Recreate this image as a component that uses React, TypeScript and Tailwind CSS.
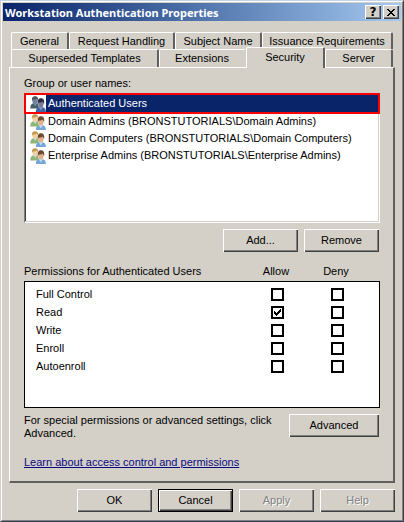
import { useState } from "react";
import type { ReactNode } from "react";

const permissions = [
  { name: "Full Control", allow: false, deny: false },
  { name: "Read", allow: true, deny: false },
  { name: "Write", allow: false, deny: false },
  { name: "Enroll", allow: false, deny: false },
  { name: "Autoenroll", allow: false, deny: false },
];

const users = [
  "Authenticated Users",
  "Domain Admins (BRONSTUTORIALS\\Domain Admins)",
  "Domain Computers (BRONSTUTORIALS\\Domain Computers)",
  "Enterprise Admins (BRONSTUTORIALS\\Enterprise Admins)",
];

function UsersIcon({ selected }: { selected: boolean }) {
  const c = selected
    ? { hairA: "#4a5260", skinA: "#717f9a", bodyA: "#46606a", hairB: "#2a2c3c", skinB: "#747a98", bodyB: "#3f64a4", light: "#7d98c4" }
    : { hairA: "#c09a55", skinA: "#f2d0a0", bodyA: "#8fb573", hairB: "#6b4a30", skinB: "#e4b08a", bodyB: "#74a6d8", light: "#c3dcf2" };
  return (
    <svg viewBox="0 0 16 16" className="h-4 w-4 shrink-0" aria-hidden="true">
      <path d="M0.300 12.500C0.300 9.500 1.200 8 3 7.200h4.600l1.800 5.300z" fill={c.bodyA} />
      <path d="M3.300 7 5.200 10l1.800-3z" fill={c.light} />
      <ellipse cx="5" cy="4.200" rx="2.700" ry="3.500" fill={c.skinA} />
      <path d="M2 4.600C1.500 1.500 2.900.2 5 .2s3.600 1.200 3.100 4.400C7.500 3.800 7.200 3 6.900 2.400 5.600 3.300 4 3.500 3 3.400z" fill={c.hairA} />
      <path d="M5.800 15.900C5.800 13 7 11.700 8.800 11.200h4c2 .6 3.100 2.100 3.100 4.700z" fill={c.bodyB} />
      <path d="M8.700 11l2.200 3.400 2-3.400z" fill={c.light} />
      <ellipse cx="10.900" cy="7.400" rx="2.700" ry="3.900" fill={c.skinB} />
      <path d="M7.900 8C7.200 4 8.600 2.200 10.900 2.200s3.900 1.700 3.200 5.800c-.7-.7-1.200-1.700-1.400-2.600-1.200.9-2.600 1.100-3.800 1.100z" fill={c.hairB} />
    </svg>
  );
}

function Tab({ children, className = "", selected = false }: { children: ReactNode; className?: string; selected?: boolean }) {
  return (
    <button
      type="button"
      role="tab"
      aria-selected={selected}
      className={`flex items-center justify-center whitespace-nowrap rounded-t-[2px] border-l border-t border-r-2 border-l-white border-t-white bg-[#d4d0c8] ${className}`}
    >
      {children}
    </button>
  );
}

function PushButton({ children, className = "", isDefault = false, disabled = false }: { children: ReactNode; className?: string; isDefault?: boolean; disabled?: boolean }) {
  return (
    <button
      type="button"
      disabled={disabled}
      className={`flex h-[23px] shrink-0 items-center justify-center bg-[#d4d0c8] disabled:text-[#808080] disabled:[text-shadow:1px_1px_0_white] ${
        isDefault
          ? "border border-black shadow-[inset_1px_1px_0_white,inset_-1px_-1px_0_#404040,inset_-2px_-2px_0_#808080]"
          : "shadow-[inset_1px_1px_0_white,inset_-1px_-1px_0_#404040,inset_-2px_-2px_0_#808080]"
      } ${className}`}
    >
      {children}
    </button>
  );
}

function PermissionBox({ label, initial }: { label: string; initial: boolean }) {
  return (
    <span className="relative mx-auto block h-[13px] w-[13px]">
      <input
        type="checkbox"
        aria-label={label}
        defaultChecked={initial}
        className="peer block h-[13px] w-[13px] appearance-none border-2 border-black bg-white"
      />
      <svg viewBox="0 0 7 7" shapeRendering="crispEdges" className="pointer-events-none absolute left-[3px] top-[3px] hidden h-[7px] w-[7px] peer-checked:block" aria-hidden="true">
        <path d="M0 2h1v1h1v1h1v-1h1v-1h1v-1h1v-1h1v3h-1v1h-1v1h-1v1h-1v1h-1v-1h-1v-1h-1z" fill="black" />
      </svg>
    </span>
  );
}

export default function App() {
  const [selected, setSelected] = useState(0);
  return (
    <div className="min-h-screen w-full border border-b-[#33415c] border-l-[#d4d0c8] border-r-[#404040] border-t-[#c4d4e8] bg-[#d4d0c8] font-['Liberation_Sans',Arial,sans-serif] text-[11px] leading-[13px] text-black">
      <div className="flex min-h-[520px] flex-col border border-b-[#808080] border-l-white border-r-[#808080] border-t-white p-px">
        <header className="flex h-[18px] shrink-0 items-center bg-linear-to-r from-[#0a246a] to-[#a6caf0] pl-[2px] pr-[2px]">
          <h1 className="flex-1 whitespace-nowrap font-['Noto_Sans','Open_Sans',sans-serif] text-[11px] font-bold text-white">Workstation Authentication Properties</h1>
          <button type="button" aria-label="Help" className="flex h-[14px] w-4 items-center justify-center bg-[#d4d0c8] font-['DejaVu_Sans',sans-serif] text-[12px] font-bold shadow-[inset_1px_1px_0_white,inset_-1px_-1px_0_#404040,inset_-2px_-2px_0_#808080]">
            ?
          </button>
          <button type="button" aria-label="Close" className="ml-[2px] flex h-[14px] w-4 items-center justify-center bg-[#d4d0c8] shadow-[inset_1px_1px_0_white,inset_-1px_-1px_0_#404040,inset_-2px_-2px_0_#808080]">
            <svg viewBox="0 0 8 7" shapeRendering="crispEdges" className="h-[7px] w-2" aria-hidden="true">
              <path d="M0 0h2v1h1v1h2v-1h1v-1h2v1h-1v1h-1v1h-1v1h1v1h1v1h1v1h-2v-1h-1v-1h-2v1h-1v1h-2v-1h1v-1h1v-1h1v-1h-1v-1h-1v-1h-1z" fill="black" />
            </svg>
          </button>
        </header>

        <main className="mt-[11px] flex flex-1 flex-col px-[6px]">
          <div role="tablist" className="px-[2px]">
            <div className="flex h-[17px]">
              <Tab className="w-[58px] border-r-[#606060]">General</Tab>
              <Tab className="w-[106px] border-r-[#606060]">Request Handling</Tab>
              <Tab className="w-[87px] border-r-[#606060]">Subject Name</Tab>
              <Tab className="flex-1 border-r-[#606060]">Issuance Requirements</Tab>
            </div>
            <div className="flex h-[18px]">
              <Tab className="w-[148px] border-r-[#606060]">Superseded Templates</Tab>
              <Tab className="w-[87px] border-r-transparent">Extensions</Tab>
              <Tab selected className="relative z-10 -mb-px -mt-[2px] w-[79px] border-r-[#606060] pb-[2px]">Security</Tab>
              <Tab className="flex-1 border-r-[#606060]">Server</Tab>
            </div>
          </div>

          <section className="flex flex-1 flex-col border-b-2 border-l border-r-2 border-t border-b-[#606060] border-l-white border-r-[#606060] border-t-white pb-[11px] pl-[14px] pr-[13px] pt-[9px]">
            <h2 id="names">Group or user names:</h2>
            <ul role="listbox" aria-labelledby="names" className="mt-[3px] h-[130px] border border-b-white border-l-[#808080] border-r-white border-t-[#808080] bg-white shadow-[inset_-1px_-1px_0_#d4d0c8,inset_1px_1px_0_#404040]">
              {users.map((user, i) => (
                <li
                  key={user}
                  role="option"
                  aria-selected={selected === i}
                  onClick={() => setSelected(i)}
                  className={
                    selected === i
                      ? "-mx-px -mb-px -mt-px flex h-[21px] items-center border-2 border-[#f80000] bg-white pl-[4px]"
                      : "flex h-[17px] items-center pl-[5px]"
                  }
                >
                  <UsersIcon selected={selected === i} />
                  <span className={selected === i ? "flex h-full flex-1 items-center bg-[#0a246a] pl-[2px] text-white" : "pl-[2px]"}>{user}</span>
                </li>
              ))}
            </ul>

            <div className="mt-[6px] flex justify-end gap-[6px] pr-px">
              <PushButton className="w-[75px]">Add...</PushButton>
              <PushButton className="w-[75px]">Remove</PushButton>
            </div>

            <table className="mt-[13px] block">
              <thead className="block">
                <tr className="grid grid-cols-[1fr_60px_60px] pr-[12px]">
                  <th scope="col" className="text-left font-normal">Permissions for Authenticated Users</th>
                  <th scope="col" className="pr-[4px] font-normal">Allow</th>
                  <th scope="col" className="pr-[4px] font-normal">Deny</th>
                </tr>
              </thead>
              <tbody className="mt-[3px] block h-[127px] border border-black bg-white pl-[11px] pr-[12px] pt-[3px]">
                {permissions.map((p) => (
                  <tr key={p.name} className="grid h-[18px] grid-cols-[1fr_60px_60px] items-center">
                    <th scope="row" className="text-left font-normal">{p.name}</th>
                    <td><PermissionBox label={`Allow ${p.name}`} initial={p.allow} /></td>
                    <td><PermissionBox label={`Deny ${p.name}`} initial={p.deny} /></td>
                  </tr>
                ))}
              </tbody>
            </table>

            <div className="mt-[6px] flex items-start justify-between pr-px">
              <p className="w-[260px]">For special permissions or advanced settings, click Advanced.</p>
              <PushButton className="w-[90px]">Advanced</PushButton>
            </div>
            <a href="#permissions" className="mt-[16px] self-start text-[#0a0a80] underline">Learn about access control and permissions</a>
          </section>

          <footer className="mb-[7px] mt-[6px] flex justify-end gap-[6px]">
            <PushButton className="w-[75px]">OK</PushButton>
            <PushButton isDefault className="w-[75px]">Cancel</PushButton>
            <PushButton disabled className="w-[75px]">Apply</PushButton>
            <PushButton disabled className="w-[75px]">Help</PushButton>
          </footer>
        </main>
      </div>
    </div>
  );
}
